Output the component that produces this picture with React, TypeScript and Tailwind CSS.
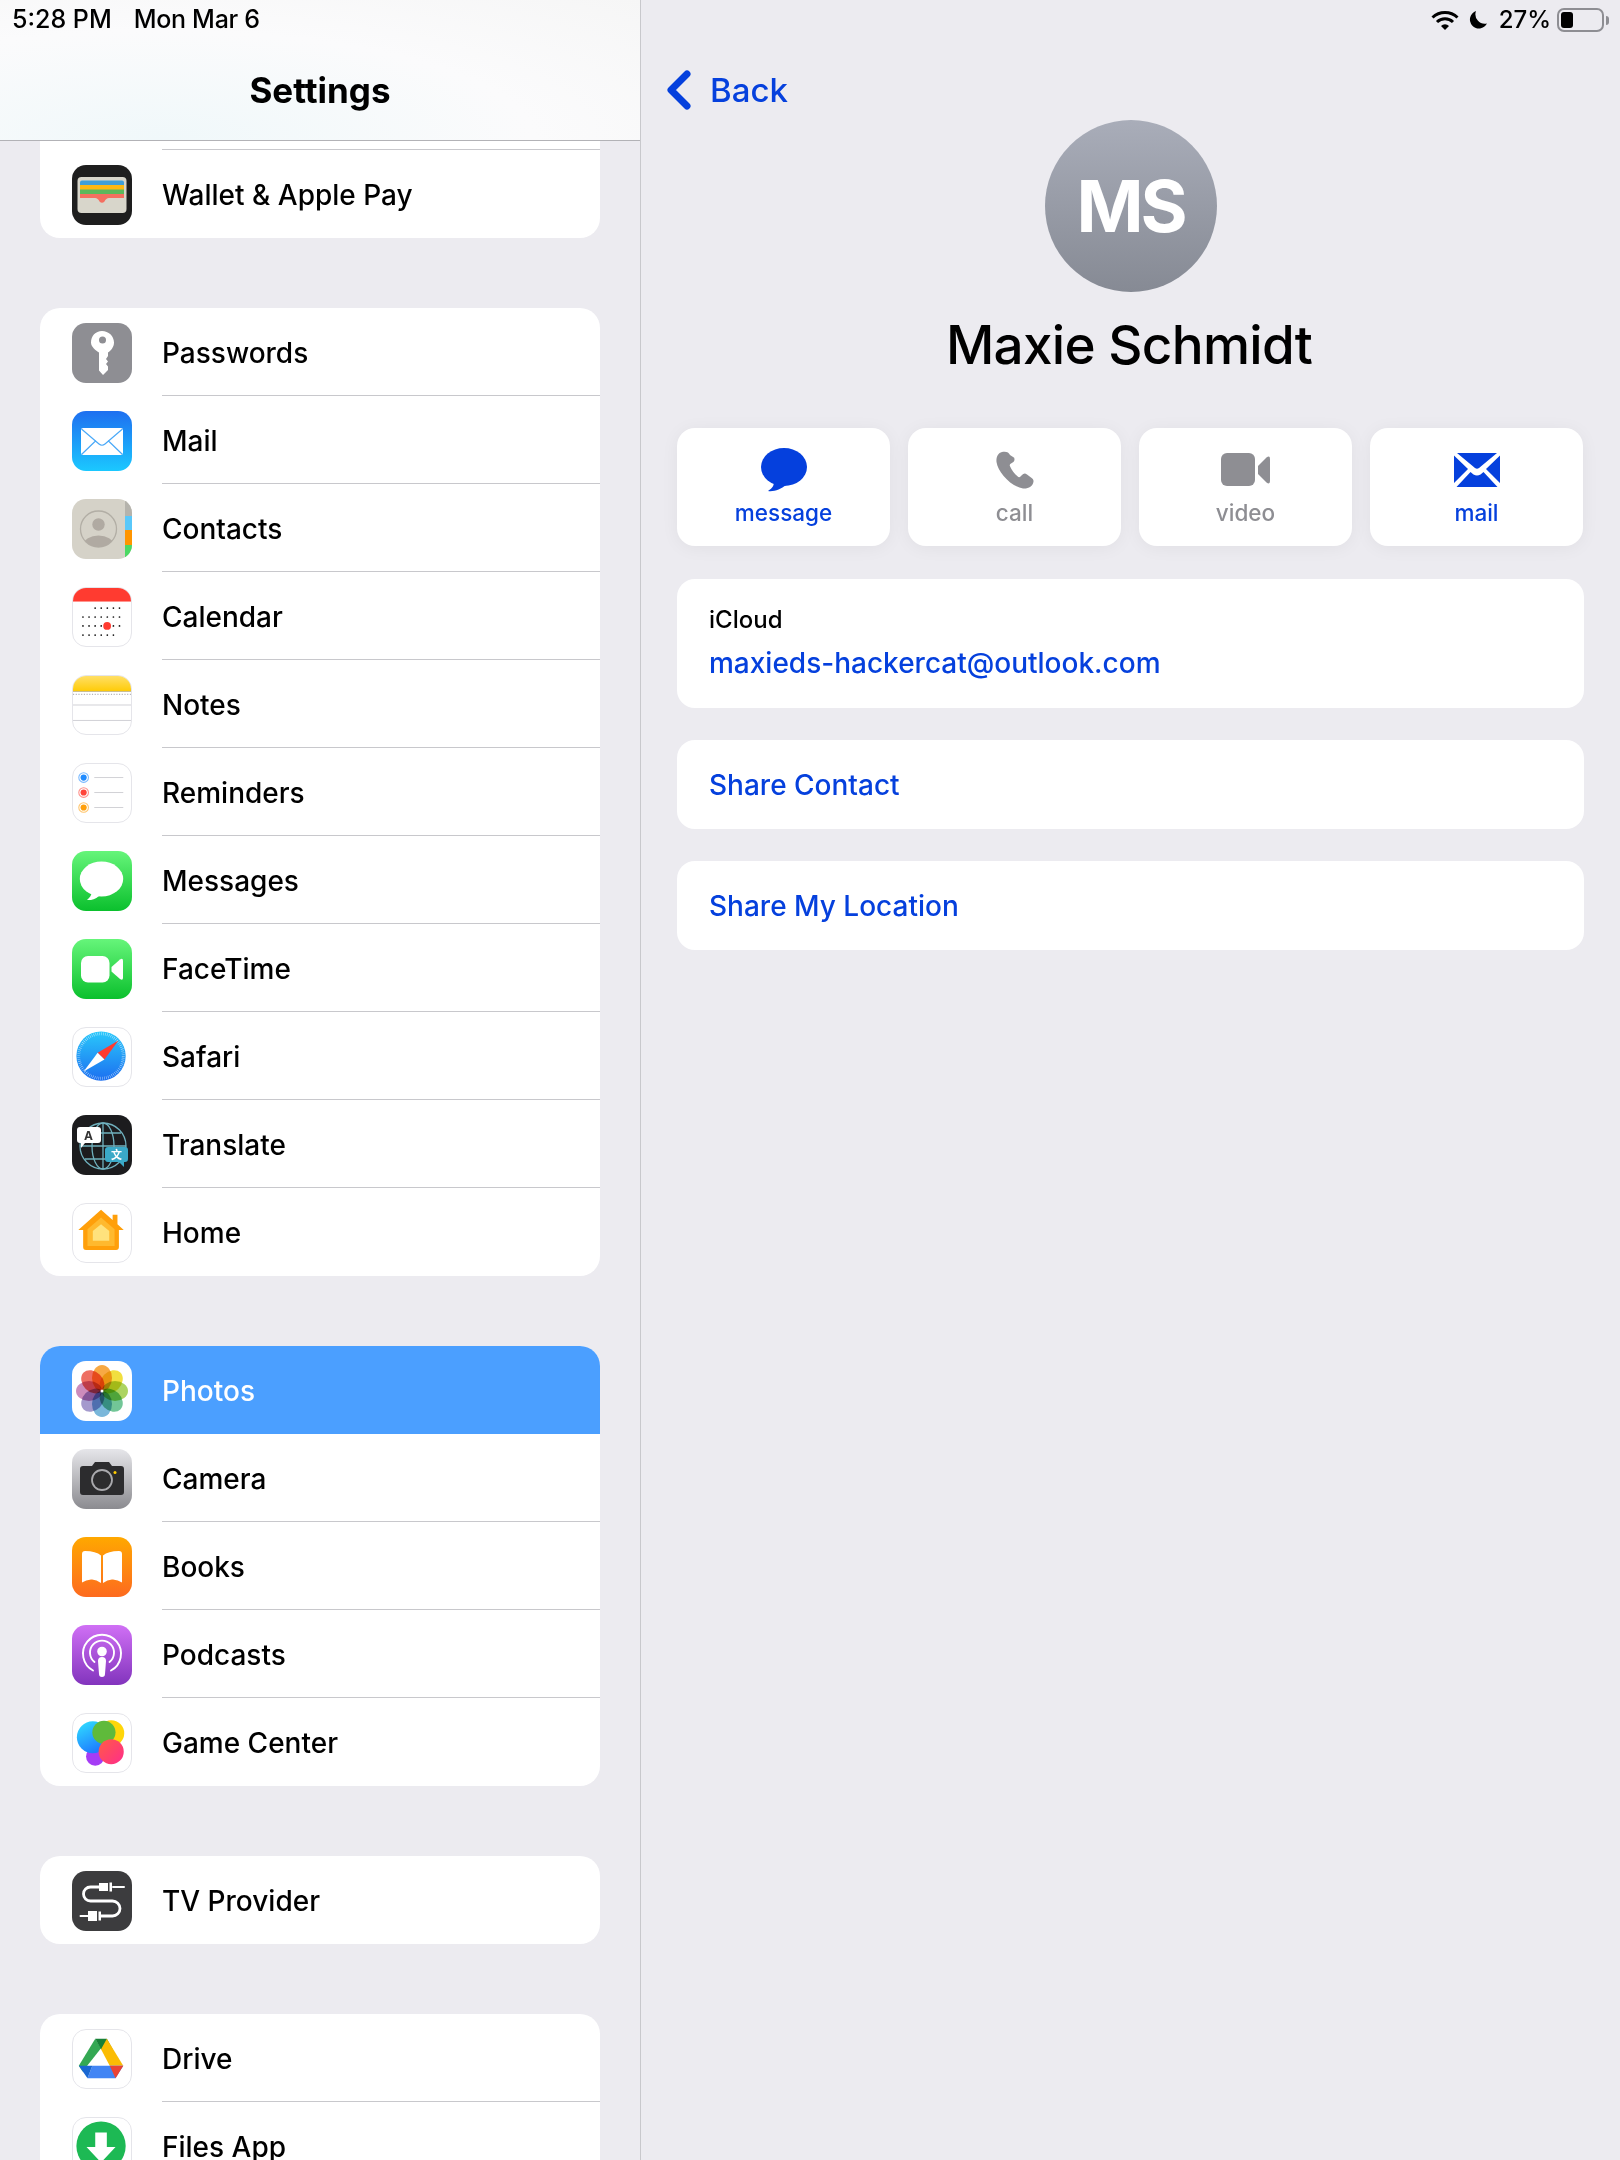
import type { ReactNode } from "react";

const Svg = ({ children, border }: { children: ReactNode; border?: boolean }) => (
  <div className={`w-[60px] h-[60px] shrink-0 rounded-[14px] overflow-hidden bg-white ${border ? "border border-[#e5e5ea]" : ""}`}>
    <svg viewBox="0 0 60 60" className={border ? "w-[58px] h-[58px]" : "w-[60px] h-[60px]"}>
      {children}
    </svg>
  </div>
);

const Grad = ({ id, from, to }: { id: string; from: string; to: string }) => (
  <defs>
    <linearGradient id={id} x1="0" y1="0" x2="0" y2="1">
      <stop offset="0" stopColor={from} />
      <stop offset="1" stopColor={to} />
    </linearGradient>
  </defs>
);

const WalletIcon = () => (
  <Svg>
    <rect width="60" height="60" fill="#1e1e1e" />
    <rect x="5.500" y="12" width="49" height="36" rx="4" fill="#d8d6cb" />
    <rect x="8" y="15.500" width="44" height="6" rx="2" fill="#3f9fd8" />
    <rect x="8" y="20" width="44" height="5" fill="#fdb813" />
    <rect x="8" y="24.500" width="44" height="5" fill="#5cb85c" />
    <path d="M8 29h44v4H37q-3 0-4.500 3.500Q30 39 27.500 36.500 26 33 23 33H8z" fill="#f46f60" />
  </Svg>
);

const KeyIcon = () => (
  <Svg>
    <rect width="60" height="60" fill="#8e8e93" />
    <path d="M30 8c6.500 0 12 5 12 11.500 0 4.500-3 8-6 10v3.500l-2 3 2 2.500-2 2.500 2 2.500V47l-5 5-4-4.500V29.500c-3-2-8-5.500-8-10C19 13 23.500 8 30 8z" fill="#fff" />
    <circle cx="30.500" cy="17" r="3.500" fill="#8e8e93" />
  </Svg>
);

const MailIcon = () => (
  <Svg>
    <Grad id="mailg" from="#1e6ff0" to="#1bc8ff" />
    <rect width="60" height="60" fill="url(#mailg)" />
    <rect x="9" y="17" width="42" height="27" rx="2" fill="#fff" />
    <path d="M9.500 18L27 33q3 2.500 6 0L50.500 18M9.500 43.500L24 29.500M50.500 43.500L36 29.500" fill="none" stroke="#4aa9f8" strokeWidth="1.200" />
  </Svg>
);

const ContactsIcon = () => (
  <Svg>
    <defs>
      <clipPath id="pc">
        <circle cx="26.500" cy="30" r="18" />
      </clipPath>
    </defs>
    <rect width="60" height="60" fill="#d5d2c8" />
    <rect x="53" width="7" height="17" fill="#b5b3ac" />
    <rect x="53" y="17" width="7" height="14" fill="#5ac8fa" />
    <rect x="53" y="31" width="7" height="15" fill="#ff9500" />
    <rect x="53" y="46" width="7" height="14" fill="#4cd964" />
    <circle cx="26.500" cy="30" r="18" fill="none" stroke="#b2aea5" strokeWidth="1.300" />
    <circle cx="26.500" cy="25.500" r="6.200" fill="#b0aaa2" />
    <ellipse cx="26.500" cy="46" rx="15" ry="9.500" fill="#b0aaa2" clipPath="url(#pc)" />
  </Svg>
);

const calendarDots: [number, number[]][] = [
  [21.7, [2, 3, 4, 5, 6]],
  [31, [0, 1, 2, 3, 4, 5, 6]],
  [40.3, [0, 1, 2, 3, 4, 5, 6]],
  [49.7, [0, 1, 2, 3, 4, 5]],
];

const CalendarIcon = () => (
  <Svg border>
    <rect width="60" height="14" fill="#ff3b30" />
    {calendarDots.map(([y, cols]) =>
      cols.map((c) => <circle key={`${y}-${c}`} cx={10.3 + c * 6.3} cy={y - 1} r="0.900" fill="#111" />)
    )}
    <circle cx="35.300" cy="39.300" r="4" fill="#ff3b30" />
  </Svg>
);

const NotesIcon = () => (
  <Svg border>
    <Grad id="noteg" from="#ffdf66" to="#ffcb05" />
    <rect width="60" height="16" fill="url(#noteg)" />
    <line x1="0" y1="16" x2="60" y2="16" stroke="#9a9a9a" strokeWidth="0.600" />
    <line x1="0" y1="19" x2="60" y2="19" stroke="#b5b5ba" strokeWidth="1.400" strokeDasharray="1.200 1.600" />
    <line x1="0" y1="30" x2="60" y2="30" stroke="#cfcfd4" strokeWidth="1" />
    <line x1="0" y1="46" x2="60" y2="46" stroke="#cfcfd4" strokeWidth="1" />
  </Svg>
);

const RemindersIcon = () => (
  <Svg border>
    {[
      [14, "#1f8bff"],
      [29.5, "#ff453a"],
      [45, "#ff9f0a"],
    ].map(([y, c]) => (
      <g key={c as string}>
        <circle cx="11" cy={y as number} r="5" fill="none" stroke={c as string} strokeOpacity="0.600" strokeWidth="1.100" />
        <circle cx="11" cy={y as number} r="3.200" fill={c as string} />
        <line x1="22" y1={y as number} x2="52" y2={y as number} stroke="#d0d0d5" strokeWidth="1" />
      </g>
    ))}
  </Svg>
);

const MessagesIcon = () => (
  <Svg>
    <Grad id="msgg" from="#66f57a" to="#0bc02d" />
    <rect width="60" height="60" fill="url(#msgg)" />
    <ellipse cx="29.500" cy="28" rx="21.700" ry="17.500" fill="#fff" />
    <path d="M20 41c-.500 3-2.500 6-5 8 3 .500 8-.500 12-4z" fill="#fff" />
  </Svg>
);

const FaceTimeIcon = () => (
  <Svg>
    <Grad id="ftg" from="#66f57a" to="#0bc02d" />
    <rect width="60" height="60" fill="url(#ftg)" />
    <rect x="9" y="17" width="28.500" height="26.500" rx="7" fill="#fff" />
    <path d="M39.500 28L48 20.500Q51 18.500 51 22V38.500Q51 42 48 40L39.500 32.500Z" fill="#fff" />
  </Svg>
);

const SafariIcon = () => (
  <Svg border>
    <Grad id="safg" from="#2ac8fb" to="#1c6ff0" />
    <circle cx="29" cy="29" r="25.500" fill="url(#safg)" />
    <circle cx="29" cy="29" r="23" fill="none" stroke="#fff" strokeOpacity="0.750" strokeWidth="3" strokeDasharray="0.500 1.500" />
    <path d="M47 13L32.500 32.500 25.500 25.500z" fill="#ff3b30" />
    <path d="M11 45L25.500 25.500 32.500 32.500z" fill="#fff" />
  </Svg>
);

const TranslateIcon = () => (
  <Svg>
    <rect width="60" height="60" fill="#1c1c1e" />
    <g fill="none" stroke="#6fb0bd" strokeWidth="1.300">
      <circle cx="31" cy="31" r="23" />
      <ellipse cx="31" cy="31" rx="11" ry="23" />
      <line x1="31" y1="8" x2="31" y2="54" />
      <line x1="8" y1="31" x2="54" y2="31" />
      <line x1="13" y1="18" x2="49" y2="18" />
      <line x1="13" y1="44" x2="49" y2="44" />
    </g>
    <path d="M8 12h18a3 3 0 0 1 3 3v10a3 3 0 0 1-3 3h-13l-4 5v-5h-1a3 3 0 0 1-3-3V15a3 3 0 0 1 3-3z" fill="#fff" />
    <text x="16.500" y="25" textAnchor="middle" fontSize="12" fontWeight="700" fill="#333" fontFamily="Inter, sans-serif">A</text>
    <path d="M36 32h17a3 3 0 0 1 3 3v9a3 3 0 0 1-3 3h-1v5l-5-5H36a3 3 0 0 1-3-3v-9a3 3 0 0 1 3-3z" fill="#3aa9c7" />
    <text x="44.500" y="44" textAnchor="middle" fontSize="11" fontWeight="700" fill="#fff" fontFamily="'Noto Sans CJK SC', sans-serif">文</text>
  </Svg>
);

const HomeIcon = () => (
  <Svg border>
    <path d="M29 6L41 16.500V11h5V21L52.500 27H47.500V44.500a3 3 0 0 1-3 3H13.500a3 3 0 0 1-3-3V27H5.500z" fill="#ff9f0a" />
    <path d="M29 14L43 26V43.500H15V26z" fill="#ffb92e" />
    <path d="M29 21L37.500 28V38H20.500V28z" fill="#ffe27d" />
  </Svg>
);

const petals = ["#f6a030", "#efdc2a", "#a4cf50", "#63c08c", "#6bafd6", "#9a8fc8", "#c77fb5", "#ec5f52"];

const PhotosIcon = () => (
  <Svg>
    {petals.map((c, i) => (
      <ellipse
        key={c}
        cx="30"
        cy="17"
        rx="10"
        ry="13"
        fill={c}
        fillOpacity="0.900"
        transform={`rotate(${i * 45} 30 30)`}
        className="mix-blend-multiply"
      />
    ))}
    <circle cx="30" cy="30" r="1.500" fill="#fff" />
  </Svg>
);

const CameraIcon = () => (
  <Svg>
    <Grad id="camg" from="#e6e6ea" to="#8b8b90" />
    <rect width="60" height="60" fill="url(#camg)" />
    <path d="M11 17h9l3-4h14l3 4h9a3 3 0 0 1 3 3v23a3 3 0 0 1-3 3H11a3 3 0 0 1-3-3V20a3 3 0 0 1 3-3z" fill="#2c2c2e" />
    <circle cx="30" cy="31" r="10" fill="none" stroke="#a9a9ad" strokeWidth="1.800" />
    <circle cx="43" cy="23.500" r="1.500" fill="#ffcc00" />
  </Svg>
);

const BooksIcon = () => (
  <Svg>
    <Grad id="bookg" from="#ffa800" to="#fd6a1f" />
    <rect width="60" height="60" fill="url(#bookg)" />
    <path d="M10 17q0-3 3-3 11 0 16 4.500V46q-5-4-10-3.500-5 .500-9 3z" fill="#fff" />
    <path d="M50 17q0-3-3-3-11 0-16 4.500V46q5-4 10-3.500 5 .500 9 3z" fill="#fff" />
  </Svg>
);

const PodcastsIcon = () => (
  <Svg>
    <Grad id="podg" from="#d070f5" to="#8234bd" />
    <rect width="60" height="60" fill="url(#podg)" />
    <g fill="none" stroke="#fff" strokeWidth="1.900" strokeLinecap="round">
      <path d="M21 45.500A19 19 0 1 1 39 45.500" />
      <path d="M22.500 37A12 12 0 1 1 37.500 37" />
    </g>
    <circle cx="30" cy="26.500" r="4.800" fill="#fff" />
    <path d="M26 36a4 4 0 0 1 8 0l-1 13a3 3 0 0 1-6 0z" fill="#fff" />
  </Svg>
);

const GameCenterIcon = () => (
  <Svg border>
    <defs>
      <linearGradient id="gcb" x1="0" y1="0" x2="0.500" y2="1">
        <stop offset="0" stopColor="#31e3ff" />
        <stop offset="1" stopColor="#1e7bff" />
      </linearGradient>
      <linearGradient id="gcp" x1="0" y1="0" x2="1" y2="1">
        <stop offset="0" stopColor="#ff5b45" />
        <stop offset="1" stopColor="#ff2d8b" />
      </linearGradient>
    </defs>
    <circle cx="23" cy="44" r="9.500" fill="#a53cf5" />
    <circle cx="39.500" cy="20" r="13.500" fill="#ffd60a" />
    <circle cx="20.500" cy="24" r="16.500" fill="url(#gcb)" />
    <circle cx="32" cy="19" r="12" fill="#5fba3b" />
    <circle cx="39.500" cy="39" r="13" fill="url(#gcp)" />
  </Svg>
);

const TvIcon = () => (
  <Svg>
    <rect width="60" height="60" fill="#3c3c3e" />
    <path d="M27 16H18.500a7 7 0 0 0 0 14H40.500a7.500 7.500 0 0 1 0 15H29" fill="none" stroke="#fff" strokeWidth="2.800" />
    <path d="M41 16h11M8.500 45H16" fill="none" stroke="#fff" strokeWidth="2" strokeLinecap="round" />
    <rect x="27" y="12" width="9" height="8" fill="#fff" />
    <rect x="37.500" y="11.500" width="2.500" height="9" fill="#fff" />
    <rect x="16" y="40" width="9" height="10" fill="#fff" />
    <rect x="26.500" y="40.500" width="2.500" height="9" fill="#fff" />
  </Svg>
);

const DriveIcon = () => (
  <Svg border>
    <path d="M23 9L6 37l4 6L29 19z" fill="#34a853" />
    <path d="M35 9H23l6 11h12z" fill="#188038" />
    <path d="M35 9l17 28-14 0-9-17z" fill="#fbbc04" />
    <path d="M20 37H38l14 0-8 13H15z" fill="#4285f4" />
    <path d="M6 37H20l-5 13z" fill="#1967d2" />
    <path d="M38 37H52l-8 13z" fill="#ea4335" />
  </Svg>
);

const FilesIcon = () => (
  <Svg border>
    <circle cx="29" cy="29" r="25.500" fill="#1db954" />
    <path d="M23 15h12v15h9L29 46 14 30h9z" fill="#fff" />
  </Svg>
);

type Item = { label: string; icon: ReactNode; active?: boolean };

const Row = ({ item, last }: { item: Item; last?: boolean }) => (
  <div className={`flex items-center h-[88px] pl-[32px] gap-[30px] ${item.active ? "bg-[#4b9fff]" : ""}`}>
    <div className="mt-[2px] shrink-0">{item.icon}</div>
    <div
      className={`flex-1 h-full flex items-center pt-[2px] text-[28px] font-[550] ${
        item.active ? "text-white" : "text-black"
      } ${last || item.active ? "" : "border-b border-[#c8c8cc]"}`}
    >
      {item.label}
    </div>
  </div>
);

const Group = ({ items }: { items: Item[] }) => (
  <div className="mt-[70px] mx-[40px] bg-white rounded-[20px] overflow-hidden shrink-0">
    {items.map((item, i) => (
      <Row key={item.label} item={item} last={i === items.length - 1 || items[i + 1]?.active} />
    ))}
  </div>
);

const mainGroup: Item[] = [
  { label: "Passwords", icon: <KeyIcon /> },
  { label: "Mail", icon: <MailIcon /> },
  { label: "Contacts", icon: <ContactsIcon /> },
  { label: "Calendar", icon: <CalendarIcon /> },
  { label: "Notes", icon: <NotesIcon /> },
  { label: "Reminders", icon: <RemindersIcon /> },
  { label: "Messages", icon: <MessagesIcon /> },
  { label: "FaceTime", icon: <FaceTimeIcon /> },
  { label: "Safari", icon: <SafariIcon /> },
  { label: "Translate", icon: <TranslateIcon /> },
  { label: "Home", icon: <HomeIcon /> },
];

const mediaGroup: Item[] = [
  { label: "Photos", icon: <PhotosIcon />, active: true },
  { label: "Camera", icon: <CameraIcon /> },
  { label: "Books", icon: <BooksIcon /> },
  { label: "Podcasts", icon: <PodcastsIcon /> },
  { label: "Game Center", icon: <GameCenterIcon /> },
];

const appGroup: Item[] = [
  { label: "Drive", icon: <DriveIcon /> },
  { label: "Files App", icon: <FilesIcon /> },
];

const Sidebar = () => (
  <div className="w-[641px] shrink-0 h-full flex flex-col overflow-hidden border-r border-[#c8c8cc]">
    <div className="h-[141px] shrink-0 border-b border-[#b2b2b6] bg-[radial-gradient(ellipse_at_25%_100%,#f0f8fa_0%,#fbfbfc_55%,#f6f6f6_100%)]">
      <div className="h-[40px] flex items-center pl-[12px] gap-[22px] text-[25px] font-medium text-black">
        <span>5:28 PM</span>
        <span className="tracking-[-0.3px]">Mon Mar 6</span>
      </div>
      <div className="h-[100px] flex items-center justify-center text-[35px] font-bold text-black">Settings</div>
    </div>
    <div className="mx-[40px] bg-white rounded-b-[20px] shrink-0">
      <div className="h-[9px] ml-[122px] border-b border-[#c8c8cc]" />
      <Row item={{ label: "Wallet & Apple Pay", icon: <WalletIcon /> }} last />
    </div>
    <Group items={mainGroup} />
    <Group items={mediaGroup} />
    <Group items={[{ label: "TV Provider", icon: <TvIcon /> }]} />
    <Group items={appGroup} />
  </div>
);

const StatusRight = () => (
  <div className="h-[40px] flex items-center justify-end pr-[11px] text-[24px] font-medium text-black">
    <svg viewBox="0 0 28 20" className="w-[28px] h-[20px]">
      <path d="M1.500 7.500a18 18 0 0 1 25 0" fill="none" stroke="#000" strokeWidth="3" />
      <path d="M6 12a11.500 11.500 0 0 1 16 0" fill="none" stroke="#000" strokeWidth="3" />
      <path d="M14 20l-4-4a5.500 5.500 0 0 1 8 0z" fill="#000" />
    </svg>
    <svg viewBox="0 0 18 18" className="w-[18px] h-[18px] ml-[10px]">
      <path d="M7 0a9 9 0 1 0 11 12.500A9.500 9.500 0 0 1 7 0z" fill="#000" />
    </svg>
    <span className="ml-[12px]">27%</span>
    <div className="ml-[6px] w-[47px] h-[24px] rounded-[7px] border-2 border-[#8e8e93] p-[2px]">
      <div className="w-[12px] h-full rounded-[3px] bg-black" />
    </div>
    <div className="ml-[2px] w-[3px] h-[9px] rounded-r-full bg-[#8e8e93]" />
  </div>
);

const actions = [
  {
    label: "message",
    color: "text-[#0540dd]",
    icon: (
      <svg viewBox="0 0 46 44" className="w-[46px] h-[44px]">
        <ellipse cx="23" cy="19" rx="23" ry="19" fill="#0540dd" />
        <path d="M13 33c0 4-1 7-6 10 6 1 13-2 18-6z" fill="#0540dd" />
      </svg>
    ),
  },
  {
    label: "call",
    color: "text-[#8e8e93]",
    icon: (
      <svg viewBox="0 0 38 38" className="w-[38px] h-[38px]">
        <path d="M6 1C2 2 0 6 .500 11 2 21 14 35 27 37.500c5 .500 10-2 10.500-7 .200-2-1-3-2.500-4l-4-3c-2-1.500-3.500-1-5 .500l-1.500 1.500c-1 1-2 .800-3-.200-3-2.500-6-6.500-7.500-10-.500-1.200-.300-2 1-2.800l2-1.200c1.500-1 1.800-2.500 1.200-4.500L14 4C13 1 9.500 0 6 1z" fill="#8e8e93" />
      </svg>
    ),
  },
  {
    label: "video",
    color: "text-[#8e8e93]",
    icon: (
      <svg viewBox="0 0 49 34" className="w-[49px] h-[34px]">
        <rect width="34" height="33" rx="6" fill="#8e8e93" />
        <path d="M37 13l8.500-8.500Q49 2 49 6v22q0 4-3.500 1.500L37 21z" fill="#8e8e93" />
      </svg>
    ),
  },
  {
    label: "mail",
    color: "text-[#0540dd]",
    icon: (
      <svg viewBox="0 0 46 34" className="w-[46px] h-[34px]">
        <path d="M3 0h40l-18 15q-2 1.500-4 0zM0 2.500l14 13.500-14 14zM46 2.500l-14 13.500 14 14zM2.500 34l14-15 3 2.500q3.500 2 7 0l3-2.500 14 15z" fill="#0540dd" />
      </svg>
    ),
  },
];

const ActionButton = ({ label, color, icon }: (typeof actions)[number]) => (
  <div className="bg-white rounded-[18px] h-[118px] flex flex-col items-center shadow-[0_2px_18px_rgba(0,0,0,0.05)]">
    <div className="h-[44px] mt-[20px] flex items-center justify-center">{icon}</div>
    <span className={`mt-[6px] text-[22.5px] leading-[30px] font-medium ${color}`}>{label}</span>
  </div>
);

const Detail = () => (
  <div className="flex-1 flex flex-col px-[36px]">
    <div className="-mr-[36px]">
      <StatusRight />
    </div>
    <div className="mt-[30px] h-[40px] flex items-center -ml-[11px] gap-[18px]">
      <svg viewBox="0 0 26 40" className="w-[26px] h-[40px]">
        <path d="M21 4L5 20l16 16" fill="none" stroke="#0540dd" strokeWidth="7" strokeLinecap="round" strokeLinejoin="round" />
      </svg>
      <span className="pt-[2px] text-[33px] font-medium text-[#0540dd]">Back</span>
    </div>
    <div className="mt-[10px] self-center w-[172px] h-[172px] rounded-full bg-gradient-to-b from-[#a9adb9] to-[#868a94] flex items-center justify-center text-white text-[72px] font-bold tracking-[-3px]">
      MS
    </div>
    <div className="mt-[18px] h-[70px] pt-[2px] pr-[3px] flex items-center justify-center text-[53px] font-medium tracking-[-0.7px] text-black">Maxie Schmidt</div>
    <div className="mt-[48px] grid grid-cols-4 gap-[18px] pr-[1px]">
      {actions.map((a) => (
        <ActionButton key={a.label} {...a} />
      ))}
    </div>
    <div className="mt-[33px] h-[129px] bg-white rounded-[18px] px-[32px] pt-[23px]">
      <div className="text-[24px] leading-[36px] font-medium text-black">iCloud</div>
      <div className="mt-[6px] text-[28px] leading-[38px] font-medium text-[#0540dd]">maxieds-hackercat@outlook.com</div>
    </div>
    <div className="mt-[32px] h-[89px] bg-white rounded-[18px] px-[32px] flex items-center text-[28px] font-medium text-[#0540dd]">
      Share Contact
    </div>
    <div className="mt-[32px] h-[89px] bg-white rounded-[18px] px-[32px] flex items-center text-[28px] font-medium text-[#0540dd]">
      Share My Location
    </div>
  </div>
);

export default function App() {
  return (
    <div className="w-[1620px] h-[2160px] overflow-hidden flex bg-[#ecebf0] font-['Inter',sans-serif]">
      <Sidebar />
      <Detail />
    </div>
  );
}
